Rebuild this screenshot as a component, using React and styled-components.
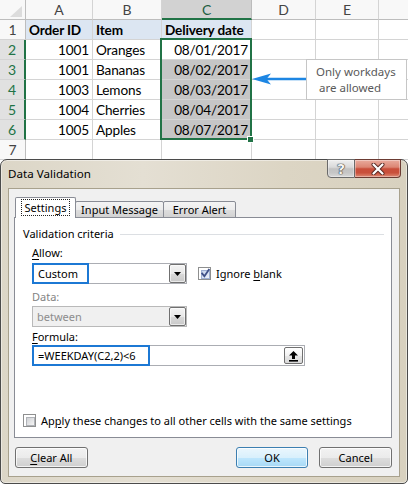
import React from 'react';
import styled, { createGlobalStyle } from 'styled-components';

const Global = createGlobalStyle`
  html, body { margin: 0; padding: 0; background: #fff; }
  body { width: 408px; height: 484px; overflow: hidden; }
  * { box-sizing: border-box; }
`;

const Stage = styled.div`
  position: relative;
  width: 408px;
  height: 484px;
  overflow: hidden;
  background: #fff;
`;

/* ---------- spreadsheet ---------- */
const Sheet = styled.div`
  display: grid;
  grid-template-columns: 26px 67px 69px 90px 64px 63px 30px;
  grid-auto-rows: 20px;
  font-family: Lato, "Liberation Sans", sans-serif;
  font-size: 13.6px;
  letter-spacing: -0.15px;
  color: #000;
`;

const Cell = styled.div`
  display: flex;
  align-items: center;
  padding: 0 3px;
  white-space: nowrap;
  overflow: hidden;
  border-right: 1px solid #d4d4d4;
  border-bottom: 1px solid #d4d4d4;
  justify-content: ${(p) => (p.$right ? 'flex-end' : 'flex-start')};
  background: ${(p) => p.$bg || '#fff'};
  font-weight: ${(p) => (p.$bold ? 700 : 400)};
`;

const ColHead = styled.div`
  display: flex;
  align-items: center;
  justify-content: center;
  color: ${(p) => (p.$sel ? '#215d3f' : '#444')};
  background: ${(p) => (p.$sel ? '#d2d2d2' : '#f8f8f8')};
  border-right: 1px solid ${(p) => (p.$sel ? '#bcbcbc' : '#d4d4d4')};
  border-bottom: ${(p) => (p.$sel ? '2px solid #217346' : '1px solid #bdbdbd')};
  font-size: 14px;
`;

const RowHead = styled.div`
  display: flex;
  align-items: center;
  justify-content: center;
  color: ${(p) => (p.$sel ? '#217346' : '#444')};
  background: ${(p) => (p.$sel ? '#e1e1e1' : '#f8f8f8')};
  border-right: ${(p) => (p.$sel ? '2px solid #217346' : '1px solid #bdbdbd')};
  border-bottom: 1px solid #d4d4d4;
  font-size: 14px;
`;

const Corner = styled.div`
  background: #f8f8f8;
  border-right: 1px solid #bdbdbd;
  border-bottom: 1px solid #bdbdbd;
  display: flex;
  align-items: flex-end;
  justify-content: flex-end;
  padding: 0 3px 2px 0;
`;

const SelectionFrame = styled.div`
  position: absolute;
  left: 160px;
  top: 38px;
  width: 92px;
  height: 102px;
  border: 2px solid #217346;
  pointer-events: none;
`;

const FillHandle = styled.div`
  position: absolute;
  left: 247px;
  top: 136px;
  width: 7px;
  height: 7px;
  background: #217346;
  border: 1px solid #fff;
`;

const Callout = styled.div`
  position: absolute;
  left: 306px;
  top: 59px;
  width: 101px;
  height: 41px;
  border: 1px solid #c6c6c6;
  background: #fff;
  padding: 4px 0 0 9px;
  font-family: "Noto Sans", "Open Sans", sans-serif;
  font-size: 11.5px;
  line-height: 16px;
  color: #595959;
  white-space: pre;
`;

const ArrowSvg = styled.svg`
  position: absolute;
  left: 250px;
  top: 72px;
`;

/* ---------- dialog ---------- */
const Dialog = styled.div`
  position: absolute;
  left: 0;
  top: 159px;
  width: 408px;
  height: 325px;
  border: 1px solid #4b4b4b;
  border-radius: 7px 7px 5px 5px;
  background: linear-gradient(90deg, #dcd6c7 0%, #e4dfd3 35%, #dcd5c4 70%, #d8d1bf 100%);
  box-shadow: inset 0 0 0 1px rgba(255, 255, 255, 0.45);
  display: flex;
  flex-direction: column;
  font-family: "Segoe UI", "Noto Sans", sans-serif;
  font-size: 11px;
  color: #000;
`;

const TitleBar = styled.div`
  flex: none;
  height: 28px;
  display: flex;
  align-items: flex-start;
  padding-left: 7px;
`;

const Title = styled.div`
  flex: 1;
  line-height: 27px;
  font-size: 11.6px;
`;

const CaptionGroup = styled.div`
  display: flex;
  margin-top: -1px;
  margin-right: 6px;
`;

const CaptionBtn = styled.div`
  height: 19px;
  width: ${(p) => p.$w}px;
  display: flex;
  align-items: center;
  justify-content: center;
  border: 1px solid ${(p) => (p.$close ? '#6b3b33' : '#6a6a6a')};
  border-left-width: ${(p) => (p.$close ? 0 : 1)}px;
  border-radius: ${(p) => (p.$close ? '0 0 4px 0' : '0 0 0 4px')};
  background: ${(p) =>
    p.$close
      ? 'linear-gradient(180deg, #e9ab9d 0%, #dc8674 42%, #c94e3a 52%, #c9503b 75%, #dd8a74 100%)'
      : 'linear-gradient(180deg, #eeeeee 0%, #dadada 42%, #c2c2c2 52%, #c6c6c6 75%, #d9d9d9 100%)'};
  box-shadow: inset 0 0 0 1px rgba(255, 255, 255, 0.35);
`;

const HelpGlyph = styled.span`
  font-family: "DejaVu Sans", sans-serif;
  font-weight: 700;
  font-size: 14px;
  line-height: 1;
  color: #f4f4f4;
  text-shadow: 0 0 1px #333, 0 0 1px #333, 0 0 1px #333;
`;

const Client = styled.div`
  flex: 1;
  margin: 0 7px 6px 7px;
  background: #f0f0f0;
  border: 1px solid #a8a18d;
  padding: 8px 7px 0 5px;
  display: flex;
  flex-direction: column;
`;

const TabStrip = styled.div`
  display: flex;
  align-items: flex-end;
  height: 21px;
  padding-left: 1px;
  margin-bottom: -1px;
  position: relative;
  z-index: 1;
`;

const Tab = styled.div`
  width: ${(p) => p.$w}px;
  height: ${(p) => (p.$active ? 21 : 17)}px;
  margin-left: -1px;
  border: 1px solid #898c95;
  border-bottom: ${(p) => (p.$active ? 'none' : '1px solid #898c95')};
  border-radius: 2px 2px 0 0;
  background: ${(p) =>
    p.$active ? '#fff' : 'linear-gradient(180deg, #f4f4f4 0%, #ececec 50%, #dedede 52%, #d2d2d2 100%)'};
  display: flex;
  align-items: ${(p) => (p.$active ? 'flex-start' : 'center')};
  justify-content: center;
  padding-top: ${(p) => (p.$active ? 1 : 0)}px;
  &:first-child { margin-left: 0; }
`;

const FocusText = styled.span`
  border: 1px dotted #222;
  padding: 0 3px;
  line-height: 15px;
  height: 17px;
`;

const Panel = styled.div`
  height: 221px;
  background: #fff;
  border: 1px solid #898c95;
  display: flex;
  flex-direction: column;
`;

const Legend = styled.div`
  display: flex;
  align-items: center;
  gap: 6px;
  height: 16px;
  margin: 8px 7px 0 8px;
  line-height: 16px;
  &::after {
    content: '';
    flex: 1;
    height: 1px;
    background: #dcdfe3;
  }
`;

const Fields = styled.div`
  margin-left: 17px;
  display: flex;
  flex-direction: column;
`;

const Label = styled.div`
  height: 16px;
  line-height: 16px;
  margin-top: ${(p) => p.$mt || 0}px;
  color: ${(p) => (p.$disabled ? '#838383' : '#000')};
`;

const U = styled.span`
  text-decoration: underline;
  text-underline-offset: 2px;
`;

const Row = styled.div`
  display: flex;
  align-items: center;
  gap: 11px;
  margin-top: ${(p) => p.$mt || 0}px;
`;

const Combo = styled.div`
  width: ${(p) => p.$w}px;
  height: 21px;
  display: flex;
  align-items: center;
  border: 1px solid ${(p) => (p.$disabled ? '#b9b9b9' : '#abadb3')};
  background: ${(p) => (p.$disabled ? '#f0f0f0' : '#fff')};
  color: ${(p) => (p.$disabled ? '#8d8d8d' : '#000')};
`;

const ComboText = styled.div`
  flex: 1;
  padding-left: 4px;
  line-height: 19px;
`;

const Highlight = styled.div`
  width: ${(p) => p.$w}px;
  height: 21px;
  margin: -1px 0 -1px -1px;
  border: 2px solid #1c78d4;
  padding-left: 4px;
  line-height: 17px;
  white-space: nowrap;
`;

const Spacer = styled.div`
  flex: 1;
`;

const DropBtn = styled.div`
  width: 17px;
  height: 19px;
  border: 1px solid #707070;
  border-radius: 2px;
  background: linear-gradient(180deg, #f4f4f4 0%, #e8e8e8 50%, #d9d9d9 52%, #c9c9c9 100%);
  box-shadow: inset 0 0 0 1px rgba(255, 255, 255, 0.6);
  display: flex;
  align-items: center;
  justify-content: center;
`;

const RefBtn = styled.div`
  width: 19px;
  height: 17px;
  margin-right: 1px;
  border: 1px solid #707070;
  border-radius: 2px;
  background: linear-gradient(180deg, #ffffff 0%, #f2f2f2 50%, #e6e6e6 52%, #dadada 100%);
  display: flex;
  align-items: center;
  justify-content: center;
`;

const CheckLine = styled.label`
  display: flex;
  align-items: center;
  gap: 5px;
  height: 16px;
  margin-top: ${(p) => p.$mt || 0}px;
  margin-left: ${(p) => p.$ml || 0}px;
`;

const Box = styled.span`
  position: relative;
  flex: none;
  width: 13px;
  height: 13px;
  border: 1px solid #8e8f8f;
  background: #fff;
  &::before {
    content: '';
    position: absolute;
    left: 2px;
    top: 2px;
    width: 7px;
    height: 7px;
    border: 1px solid ${(p) => (p.$checked ? '#9fb0d3' : '#b0b3b8')};
    background: ${(p) =>
      p.$checked
        ? 'linear-gradient(135deg, #c5d3ec 0%, #eef2fa 100%)'
        : 'linear-gradient(135deg, #cfd1d4 0%, #f5f5f5 100%)'};
  }
`;

const CheckMark = styled.svg`
  position: absolute;
  left: 1px;
  top: 0px;
`;

const ButtonRow = styled.div`
  display: flex;
  align-items: center;
  margin-top: 9px;
  padding-left: 1px;
`;

const PushButton = styled.div`
  width: 73px;
  height: 21px;
  margin-left: ${(p) => p.$ml || 0}px;
  border: 1px solid ${(p) => (p.$default ? '#3c7fb1' : '#707070')};
  border-radius: 3px;
  background: ${(p) =>
    p.$default
      ? 'linear-gradient(180deg, #eaf6fd 0%, #d9f0fc 50%, #bee6fd 52%, #a7d9f5 100%)'
      : 'linear-gradient(180deg, #f2f2f2 0%, #ebebeb 50%, #dddddd 52%, #cfcfcf 100%)'};
  box-shadow: inset 0 0 0 1px rgba(255, 255, 255, 0.75);
  display: flex;
  align-items: center;
  justify-content: center;
  line-height: 19px;
`;

/* ---------- icons ---------- */
const DownArrow = () => (
  <svg width="7" height="4" viewBox="0 0 7 4">
    <path d="M0 0 H7 L3.5 4 Z" fill="#000" />
  </svg>
);

const CheckIcon = () => (
  <CheckMark width="11" height="11" viewBox="0 0 11 11">
    <path d="M2.2 5.6 L4.4 8.2 L8.8 1.8" fill="none" stroke="#3f5087" strokeWidth="1.8" strokeLinecap="square" />
  </CheckMark>
);

const RefIcon = () => (
  <svg width="11" height="12" viewBox="0 0 11 12">
    <path d="M5.5 1 L10 5.5 H7 V9 H4 V5.5 H1 Z" fill="#000" />
    <rect x="1" y="10" width="9" height="1.6" fill="#000" />
  </svg>
);

const CloseIcon = () => (
  <svg width="14" height="12" viewBox="0 0 14 12">
    <path d="M2.5 1.5 L11.5 10.5 M11.5 1.5 L2.5 10.5" stroke="#5a2a24" strokeWidth="4" strokeLinecap="round" />
    <path d="M2.5 1.5 L11.5 10.5 M11.5 1.5 L2.5 10.5" stroke="#ffffff" strokeWidth="2.2" strokeLinecap="round" />
  </svg>
);

const CornerIcon = () => (
  <svg width="12" height="11" viewBox="0 0 12 11">
    <path d="M12 0 V11 H0 Z" fill="#dcdcdc" />
  </svg>
);

/* ---------- data ---------- */
const columns = ['A', 'B', 'C', 'D', 'E', ''];
const rows = [
  { n: 1, v: ['Order ID', 'Item', 'Delivery date', '', '', ''], head: true },
  { n: 2, v: ['1001', 'Oranges', '08/01/2017', '', '', ''] },
  { n: 3, v: ['1001', 'Bananas', '08/02/2017', '', '', ''] },
  { n: 4, v: ['1003', 'Lemons', '08/03/2017', '', '', ''] },
  { n: 5, v: ['1004', 'Cherries', '08/04/2017', '', '', ''] },
  { n: 6, v: ['1005', 'Apples', '08/07/2017', '', '', ''] },
  { n: 7, v: ['', '', '', '', '', ''] },
];

function cellBg(row, ci) {
  if (row.head && ci < 3) return '#dce6f2';
  if (ci === 2 && row.n >= 3 && row.n <= 6) return '#c6c6c6';
  return '#fff';
}

export default function App() {
  return (
    <Stage>
      <Global />
      <Sheet>
        <Corner>
          <CornerIcon />
        </Corner>
        {columns.map((c, i) => (
          <ColHead key={'h' + i} $sel={c === 'C'}>
            {c}
          </ColHead>
        ))}
        {rows.map((row) => (
          <React.Fragment key={row.n}>
            <RowHead $sel={row.n >= 2 && row.n <= 6}>{row.n}</RowHead>
            {row.v.map((val, ci) => (
              <Cell
                key={ci}
                $bg={cellBg(row, ci)}
                $bold={row.head}
                $right={!row.head && (ci === 0 || ci === 2)}
              >
                {val}
              </Cell>
            ))}
          </React.Fragment>
        ))}
      </Sheet>

      <SelectionFrame />
      <FillHandle />

      <ArrowSvg width="58" height="14" viewBox="0 0 58 14">
        <path d="M16 7 H57" stroke="#1d86e3" strokeWidth="2.4" />
        <path d="M2 7 L21 1.6 L16.5 7 L21 12.4 Z" fill="#1d86e3" />
      </ArrowSvg>
      <Callout>{'Only workdays\n are allowed'}</Callout>

      <Dialog>
        <TitleBar>
          <Title>Data Validation</Title>
          <CaptionGroup>
            <CaptionBtn $w={28}>
              <HelpGlyph>?</HelpGlyph>
            </CaptionBtn>
            <CaptionBtn $w={46} $close>
              <CloseIcon />
            </CaptionBtn>
          </CaptionGroup>
        </TitleBar>

        <Client>
          <TabStrip>
            <Tab $w={61} $active>
              <FocusText>Settings</FocusText>
            </Tab>
            <Tab $w={89}>Input Message</Tab>
            <Tab $w={73}>Error Alert</Tab>
          </TabStrip>

          <Panel>
            <Legend>Validation criteria</Legend>
            <Fields>
              <Label $mt={3}>
                <U>A</U>llow:
              </Label>
              <Row $mt={2}>
                <Combo $w={155}>
                  <Highlight $w={57}>Custom</Highlight>
                  <Spacer />
                  <DropBtn>
                    <DownArrow />
                  </DropBtn>
                </Combo>
                <CheckLine>
                  <Box $checked>
                    <CheckIcon />
                  </Box>
                  <span>
                    Ignore <U>b</U>lank
                  </span>
                </CheckLine>
              </Row>
              <Label $mt={5} $disabled>
                Data:
              </Label>
              <Row $mt={1}>
                <Combo $w={155} $disabled>
                  <ComboText>between</ComboText>
                  <DropBtn>
                    <DownArrow />
                  </DropBtn>
                </Combo>
              </Row>
              <Label $mt={2}>
                <U>F</U>ormula:
              </Label>
              <Row $mt={0}>
                <Combo $w={273}>
                  <Highlight $w={118}>=WEEKDAY(C2,2)&lt;6</Highlight>
                  <Spacer />
                  <RefBtn>
                    <RefIcon />
                  </RefBtn>
                </Combo>
              </Row>
            </Fields>
            <CheckLine $mt={46} $ml={8}>
              <Box />
              <span>
                Ap<U>p</U>ly these changes to all other cells with the same settings
              </span>
            </CheckLine>
          </Panel>

          <ButtonRow>
            <PushButton>
              <span>
                <U>C</U>lear All
              </span>
            </PushButton>
            <PushButton $ml={148} $default>
              OK
            </PushButton>
            <PushButton $ml={11}>Cancel</PushButton>
          </ButtonRow>
        </Client>
      </Dialog>
    </Stage>
  );
}
